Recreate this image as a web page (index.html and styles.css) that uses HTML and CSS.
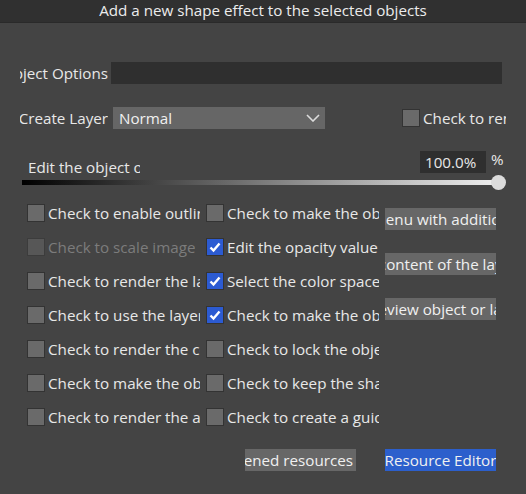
FILE: index.html
```html
<!DOCTYPE html>
<html>
<head>
<meta charset="utf-8">
<link rel="stylesheet" href="styles.css">
</head>
<body>
<div class="titlebar">Add a new shape effect to the selected objects</div>
<div class="panel">
  <div class="field-row row-name">
    <div class="field-label"><span>Object Options</span></div>
    <div class="text-input"></div>
  </div>
  <div class="field-row row-layer">
    <div class="field-label"><span>Create Layer</span></div>
    <div class="select">
      <span>Normal</span>
      <svg class="chevron" width="14" height="8" viewBox="0 0 14 8"><polyline points="1,1 7,7 13,1" fill="none" stroke="#dcdcdc" stroke-width="1.6"/></svg>
    </div>
    <label class="check top-check"><span class="box"></span><span class="text">Check to render the layer</span></label>
  </div>
  <div class="slider-block">
    <div class="slider-head">
      <div class="slider-label">Edit the object opacity</div>
      <div class="number-box">100.0%</div>
      <div class="unit">%</div>
    </div>
    <div class="slider">
      <div class="track"></div>
      <div class="thumb"></div>
    </div>
  </div>
  <div class="options">
    <div class="col">
      <label class="check"><span class="box"></span><span class="text">Check to enable outline of the shape</span></label>
      <label class="check disabled"><span class="box"></span><span class="text">Check to scale image</span></label>
      <label class="check"><span class="box"></span><span class="text">Check to render the layer</span></label>
      <label class="check"><span class="box"></span><span class="text">Check to use the layer mask</span></label>
      <label class="check"><span class="box"></span><span class="text">Check to render the content</span></label>
      <label class="check"><span class="box"></span><span class="text">Check to make the object</span></label>
      <label class="check"><span class="box"></span><span class="text">Check to render the area</span></label>
    </div>
    <div class="col">
      <label class="check"><span class="box"></span><span class="text">Check to make the object visible</span></label>
      <label class="check"><span class="box checked"><svg width="14" height="14" viewBox="0 0 14 14"><polyline points="2.5,7.5 5.5,10.5 11.5,3.5" fill="none" stroke="#fff" stroke-width="2.4"/></svg></span><span class="text">Edit the opacity value</span></label>
      <label class="check"><span class="box checked"><svg width="14" height="14" viewBox="0 0 14 14"><polyline points="2.5,7.5 5.5,10.5 11.5,3.5" fill="none" stroke="#fff" stroke-width="2.4"/></svg></span><span class="text">Select the color space</span></label>
      <label class="check"><span class="box checked"><svg width="14" height="14" viewBox="0 0 14 14"><polyline points="2.5,7.5 5.5,10.5 11.5,3.5" fill="none" stroke="#fff" stroke-width="2.4"/></svg></span><span class="text">Check to make the object</span></label>
      <label class="check"><span class="box"></span><span class="text">Check to lock the object</span></label>
      <label class="check"><span class="box"></span><span class="text">Check to keep the shape</span></label>
      <label class="check"><span class="box"></span><span class="text">Check to create a guide</span></label>
    </div>
    <div class="side">
      <div class="btn"><span>Open the menu with additional options</span></div>
      <div class="btn"><span>Edit the content of the layer items</span></div>
      <div class="btn"><span>Preview object or laye</span></div>
    </div>
  </div>
  <div class="footer">
    <div class="btn"><span>Opened resources</span></div>
    <div class="btn primary"><span>Resource Editor</span></div>
  </div>
</div>
</body>
</html>
```
FILE: styles.css
```css
* { box-sizing: border-box; }
html, body { margin: 0; padding: 0; }
body {
  width: 526px;
  height: 494px;
  overflow: hidden;
  background: #444444;
  color: #e8e8e8;
  font-family: "Open Sans", "Noto Sans", sans-serif;
  font-size: 15.2px;
}
.titlebar {
  height: 23px;
  background: #303030;
  border-bottom: 1px solid #2a2a2a;
  text-align: center;
  line-height: 21px;
  color: #ececec;
}
.panel {
  padding: 0 20px 0 20px;
}
.field-row {
  display: flex;
  align-items: center;
  height: 22px;
}
.row-name { margin-top: 39px; }
.row-layer { margin-top: 23px; }
.field-label {
  width: 88px;
  flex: none;
  display: flex;
  justify-content: flex-end;
  overflow: hidden;
  white-space: nowrap;
}
.text-input {
  flex: none;
  margin-left: 3px;
  width: 391px;
  height: 22px;
  background: #2f2f2f;
}
.select {
  flex: none;
  margin-left: 5px;
  width: 212px;
  height: 22px;
  background: #666666;
  display: flex;
  align-items: center;
  justify-content: space-between;
  padding: 0 5px 0 6px;
  color: #f0f0f0;
}
.chevron { display: block; }
.slider-block { margin-top: 20px; padding-left: 2px; }
.slider-head {
  display: flex;
  align-items: center;
  height: 22px;
}
.slider-label {
  flex: none;
  margin-left: 6px;
  width: 112px;
  overflow: hidden;
  white-space: nowrap;
  margin-top: 14px;
}
.number-box {
  flex: none;
  margin-left: 280px;
  width: 66px;
  height: 22px;
  background: #2f2f2f;
  line-height: 22px;
  padding-left: 5px;
  margin-top: 4px;
}
.unit { flex: none; margin-left: 5px; margin-top: -2px; }
.slider {
  position: relative;
  margin-top: 9px;
  height: 5px;
  width: 476px;
}
.track {
  height: 5px;
  background: linear-gradient(to right, #000000, #7a7a7a 50%, #f0f0f0);
}
.thumb {
  position: absolute;
  right: -8px;
  top: -5px;
  width: 15px;
  height: 15px;
  border-radius: 50%;
  background: #dcdcdc;
}
.options {
  display: flex;
  margin-top: 11px;
  padding-left: 7px;
}
.col { flex: none; display: flex; flex-direction: column; width: 179px; }
.check {
  display: flex;
  align-items: center;
  height: 34px;
  overflow: hidden;
  white-space: nowrap;
  width: 173px;
}
.check.top-check {
  flex: none;
  margin-left: 77px;
  width: 104px;
}
.box {
  flex: none;
  width: 18px;
  height: 18px;
  background: #6a6a6a;
  border: 1px solid #333333;
  display: flex;
  align-items: center;
  justify-content: center;
}
.box.checked { background: #2c5bd2; }
.box svg { display: block; }
.check .text {
  margin-left: 3px;
  overflow: hidden;
}
.disabled .box { background: #575757; border-color: #3c3c3c; }
.disabled .text { color: #7c7c7c; }
.side {
  flex: none;
  width: 111px;
  display: flex;
  flex-direction: column;
  padding-top: 12px;
  gap: 23px;
}
.btn {
  flex: none;
  width: 111px;
  height: 22px;
  background: #676767;
  display: flex;
  justify-content: center;
  align-items: center;
  overflow: hidden;
  white-space: nowrap;
  color: #f0f0f0;
}
.btn span { flex: none; }
.footer {
  display: flex;
  justify-content: flex-end;
  gap: 29px;
  margin-top: 15px;
  padding-right: 10px;
}
.footer .btn:first-child { justify-content: flex-end; padding-right: 3px; }
.btn.primary { background: #2c5fcc; }
```
